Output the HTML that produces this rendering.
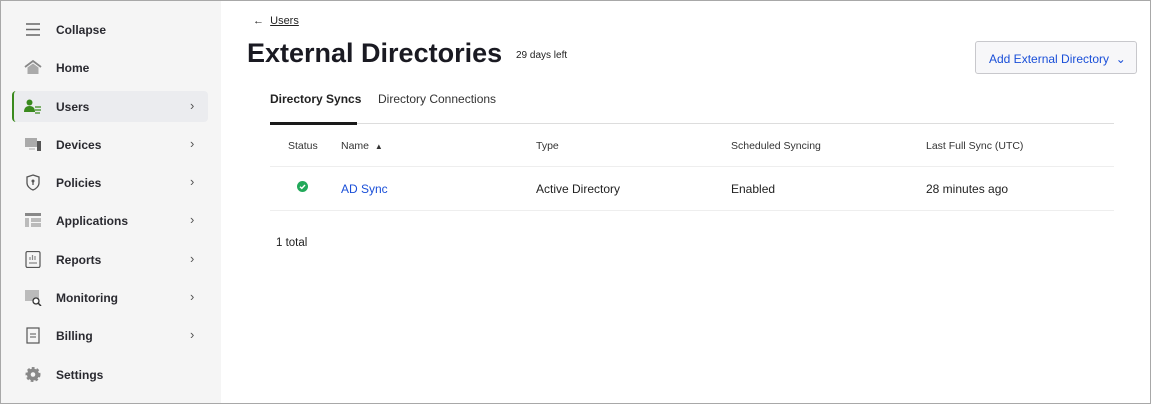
<!DOCTYPE html>
<html><head><meta charset="utf-8"><style>
*{box-sizing:border-box;margin:0;padding:0}
body{width:1151px;height:404px;font-family:"Liberation Sans",sans-serif;background:#fff;position:relative;overflow:hidden;color:#1e1e24}
.frame{position:absolute;inset:0;border:1px solid #a8a8a8;pointer-events:none;z-index:9}
.side{position:absolute;left:0;top:0;width:221px;height:404px;background:#f5f5f5}
.item{position:absolute;left:12px;width:196px;height:31px;font-size:12px;font-weight:bold;color:#2a2a30}
.item .t{position:absolute;left:44px;top:9px}
.item .ic{position:absolute;left:12px;top:7px;width:18px;height:17px}
.item .ch{position:absolute;left:178px;top:7px;font-size:13px;color:#555;font-weight:normal}
.sel{background:#ebecef;border-radius:4px;border-left:2px solid #3a8a1e}
.abs{position:absolute}
.th{position:absolute;top:140px;font-size:10.5px;color:#333}
.td{position:absolute;top:182px;font-size:12px;color:#222}
</style></head><body>
<div class="side">
 <div class="item" style="top:14px"><svg class="ic" viewBox="0 0 18 17"><path d="M2 3h14M2 8.5h14M2 14h14" stroke="#666" stroke-width="1.4"/></svg><span class="t">Collapse</span></div>
 <div class="item" style="top:52px"><svg class="ic" viewBox="0 0 18 17"><path d="M1 8L9 2l8 6" stroke="#888" stroke-width="1.8" fill="none"/><path d="M3.5 8.5L9 4.5l5.5 4V15h-11z" fill="#aaa"/></svg><span class="t">Home</span></div>
 <div class="item sel" style="top:91px"><svg class="ic" viewBox="0 0 18 17" style="left:10px"><circle cx="5.5" cy="4.5" r="3" fill="#3a8a1e"/><path d="M0 14c0-4 2-6 5.5-6S11 10 11 14z" fill="#3a8a1e"/><path d="M11 9h6M11 12h6M11 15h5" stroke="#3a8a1e" stroke-width="1.3"/></svg><span class="t" style="left:42px">Users</span><span class="ch" style="left:176px">›</span></div>
 <div class="item" style="top:129px"><svg class="ic" viewBox="0 0 18 17"><rect x="1" y="2" width="12" height="9" fill="#aaa"/><rect x="13" y="5" width="4" height="10" fill="#555"/><path d="M5 13h6" stroke="#aaa"/></svg><span class="t">Devices</span><span class="ch">›</span></div>
 <div class="item" style="top:167px"><svg class="ic" viewBox="0 0 18 17"><path d="M9 1l6 2v6c0 3-3 6-6 7-3-1-6-4-6-7V3z" fill="none" stroke="#555" stroke-width="1.3"/><circle cx="9" cy="7" r="1.5" fill="#555"/><path d="M9 8v3" stroke="#555" stroke-width="1.3"/></svg><span class="t">Policies</span><span class="ch">›</span></div>
 <div class="item" style="top:205px"><svg class="ic" viewBox="0 0 18 17"><rect x="1" y="1" width="16" height="3" fill="#888"/><rect x="1" y="6" width="4" height="9" fill="#bbb"/><rect x="7" y="6" width="10" height="4" fill="#bbb"/><rect x="7" y="11" width="10" height="4" fill="#bbb"/></svg><span class="t">Applications</span><span class="ch">›</span></div>
 <div class="item" style="top:244px"><svg class="ic" viewBox="0 0 18 17"><rect x="2" y="0.5" width="14" height="16" rx="1.5" fill="none" stroke="#555" stroke-width="1.2"/><path d="M6 9V6M8.5 9V4M11 9V5M5 12h8" stroke="#888" stroke-width="1.2"/></svg><span class="t">Reports</span><span class="ch">›</span></div>
 <div class="item" style="top:282px"><svg class="ic" viewBox="0 0 18 17"><rect x="1" y="1" width="14" height="11" fill="#bbb"/><circle cx="12" cy="12" r="3" fill="#fff" stroke="#333" stroke-width="1.3"/><path d="M14 14l3 3" stroke="#333" stroke-width="1.5"/></svg><span class="t">Monitoring</span><span class="ch">›</span></div>
 <div class="item" style="top:320px"><svg class="ic" viewBox="0 0 18 17"><rect x="3" y="1" width="12" height="15" fill="none" stroke="#555" stroke-width="1.2"/><path d="M6 7h6M6 10h6" stroke="#555"/></svg><span class="t">Billing</span><span class="ch">›</span></div>
 <div class="item" style="top:359px"><svg class="ic" viewBox="0 0 18 17"><circle cx="9" cy="8.5" r="6" fill="#888" stroke="#888" stroke-width="3" stroke-dasharray="2.5 2"/><circle cx="9" cy="8.5" r="2.3" fill="#f5f5f5"/></svg><span class="t">Settings</span></div>
</div>

<div class="abs" style="left:253px;top:15px;font-size:11px;color:#222">←&nbsp;&nbsp;<span style="text-decoration:underline">Users</span></div>
<div class="abs" style="left:247px;top:38px;font-size:27px;font-weight:bold;color:#1a1a22">External Directories</div>
<div class="abs" style="left:516px;top:50px;font-size:10px;color:#222">29 days left</div>
<div class="abs" style="left:975px;top:41px;width:162px;height:33px;border:1px solid #c8c8cc;border-radius:3px;background:#f7f7f9;color:#1a4fd8;font-size:12px;padding:10px 0 0 13px">Add External Directory&nbsp;&nbsp;⌄</div>

<div class="abs" style="left:270px;top:92px;font-size:12px;font-weight:bold;color:#222">Directory Syncs</div>
<div class="abs" style="left:378px;top:92px;font-size:12px;color:#333">Directory Connections</div>
<div class="abs" style="left:270px;top:123px;width:844px;height:1px;background:#ddd"></div>
<div class="abs" style="left:270px;top:122px;width:87px;height:3px;background:#1a1a1a"></div>

<div class="th" style="left:288px">Status</div>
<div class="th" style="left:341px">Name&nbsp;&nbsp;<span style="font-size:8px">▲</span></div>
<div class="th" style="left:536px">Type</div>
<div class="th" style="left:731px">Scheduled Syncing</div>
<div class="th" style="left:926px">Last Full Sync (UTC)</div>
<div class="abs" style="left:270px;top:166px;width:844px;height:1px;background:#eee"></div>
<svg class="abs" style="left:297px;top:181px" width="11" height="11" viewBox="0 0 11 11"><circle cx="5.5" cy="5.5" r="5.5" fill="#22a95a"/><path d="M3 5.7l1.8 1.7L8 4" stroke="#fff" stroke-width="1.4" fill="none"/></svg>
<div class="td" style="left:341px;color:#1a4fd8">AD Sync</div>
<div class="td" style="left:536px">Active Directory</div>
<div class="td" style="left:731px">Enabled</div>
<div class="td" style="left:926px">28 minutes ago</div>
<div class="abs" style="left:270px;top:210px;width:844px;height:1px;background:#eee"></div>
<div class="abs" style="left:276px;top:237px;font-size:11.5px;color:#222">1 total</div>
<div class="frame"></div>
</body></html>
